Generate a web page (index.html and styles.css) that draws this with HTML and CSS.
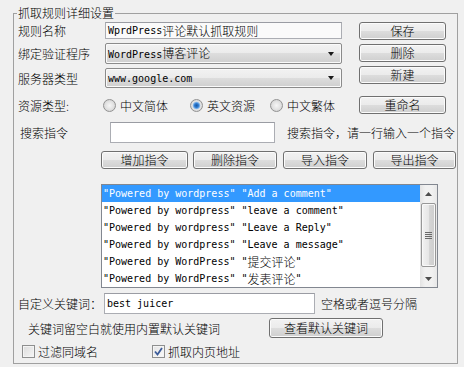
FILE: index.html
```html
<!DOCTYPE html>
<html lang="zh">
<head>
<meta charset="utf-8">
<title>抓取规则详细设置</title>
<link rel="stylesheet" href="styles.css">
</head>
<body>
<div class="window">
  <fieldset class="group">
    <legend class="group-title">抓取规则详细设置</legend>
    <div class="content">
      <div class="top">
        <div class="fields">
          <div class="field-row r1">
            <span class="label">规则名称</span>
            <div class="textbox tb-name"><span class="mono">WprdPress</span>评论默认抓取规则</div>
          </div>
          <div class="field-row r2">
            <span class="label">绑定验证程序</span>
            <div class="combo combo-tall"><span class="combo-text"><span class="mono">WordPress</span>博客评论</span><i class="arrow"></i></div>
          </div>
          <div class="field-row r3">
            <span class="label">服务器类型</span>
            <div class="combo"><span class="combo-text"><span class="mono">www.google.com</span></span><i class="arrow"></i></div>
          </div>
        </div>
        <div class="side-buttons">
          <button class="btn side-btn">保存</button>
          <button class="btn side-btn">删除</button>
          <button class="btn side-btn">新建</button>
        </div>
      </div>

      <div class="row row-type">
        <span class="label type-label">资源类型:</span>
        <span class="option opt1"><i class="radio"></i>中文简体</span>
        <span class="option opt2"><i class="radio checked"></i>英文资源</span>
        <span class="option opt3"><i class="radio"></i>中文繁体</span>
        <button class="btn side-btn">重命名</button>
      </div>

      <div class="row row-search">
        <span class="label search-label">搜索指令</span>
        <div class="textbox tb-search"></div>
        <span class="hint">搜索指令，请一行输入一个指令</span>
      </div>

      <div class="row row-cmds">
        <button class="btn cmd b1">增加指令</button>
        <button class="btn cmd b2">删除指令</button>
        <button class="btn cmd b3">导入指令</button>
        <button class="btn cmd b4">导出指令</button>
      </div>

      <div class="listbox">
        <div class="list-items">
          <div class="item selected"><span class="mono">"Powered by wordpress" "Add a comment"</span></div>
          <div class="item"><span class="mono">"Powered by wordpress" "leave a comment"</span></div>
          <div class="item"><span class="mono">"Powered by wordpress" "Leave a Reply"</span></div>
          <div class="item"><span class="mono">"Powered by wordpress" "Leave a message"</span></div>
          <div class="item"><span class="mono">"Powered by WordPress" "</span>提交评论<span class="mono">"</span></div>
          <div class="item"><span class="mono">"Powered by WordPress" "</span>发表评论<span class="mono">"</span></div>
        </div>
        <div class="scrollbar">
          <div class="sb-btn"><svg width="7" height="4" viewBox="0 0 7 4"><path d="M0 4 L3.5 0 L7 4 Z" fill="#4d4d4d"/></svg></div>
          <div class="sb-track">
            <div class="sb-thumb"><i></i><i></i><i></i><i></i></div>
          </div>
          <div class="sb-btn"><svg width="7" height="4" viewBox="0 0 7 4"><path d="M0 0 L7 0 L3.5 4 Z" fill="#4d4d4d"/></svg></div>
        </div>
      </div>

      <div class="row row-kw">
        <span class="label kw-label">自定义关键词：</span>
        <div class="textbox tb-kw"><span class="mono">best juicer</span></div>
        <span class="hint kw-hint">空格或者逗号分隔</span>
      </div>

      <div class="row row-kwhint">
        <span class="kw-note">关键词留空白就使用内置默认关键词</span>
        <button class="btn view-btn">查看默认关键词</button>
      </div>

      <div class="row row-checks">
        <span class="check-opt c1"><i class="check"></i>过滤同域名</span>
        <span class="check-opt c2"><i class="check checked"><svg width="9" height="9" viewBox="0 0 9 9"><path d="M1 4.5 L3.5 7.5 L8 1" fill="none" stroke="#3c5c9a" stroke-width="1.8"/></svg></i>抓取内页地址</span>
      </div>
    </div>
  </fieldset>
</div>
</body>
</html>
```

FILE: styles.css
```css
* { box-sizing: border-box; }
html, body { margin: 0; padding: 0; }
body {
  width: 464px;
  height: 367px;
  overflow: hidden;
  background: #f0f0f0;
  color: #000;
  font-family: "Noto Sans CJK SC", "Noto Sans", sans-serif;
  font-size: 12px;
  font-weight: 300;
}
.window { padding: 4px 0 0 13px; }
.group {
  width: 445px;
  height: 360px;
  margin: 0;
  padding: 0;
  min-width: 0;
  border: 1px solid #a0a0a0;
}
.group-title {
  margin-left: 3px;
  padding: 0 1px;
  height: 18px;
  line-height: 18px;
  font-size: 12px;
}
.content { padding-left: 4px; }
.mono {
  font-family: "DejaVu Sans Mono", "Liberation Mono", monospace;
  font-size: 10px;
  font-weight: 400;
}
.label { white-space: nowrap; flex: none; }

/* top section */
.top { display: flex; }
.fields { width: 324px; display: flex; flex-direction: column; }
.field-row { display: flex; align-items: center; }
.field-row .label { width: 87px; }
.r1 { height: 17px; }
.r2 { height: 21px; margin-top: 4px; }
.r3 { height: 20px; margin-top: 4px; }
.side-buttons {
  margin-left: 17px;
  display: flex;
  flex-direction: column;
  gap: 4px;
}

.textbox {
  height: 100%;
  background: #fff;
  border: 1px solid #abadb3;
  border-top-color: #9a9ca3;
  padding-left: 2px;
  display: flex;
  align-items: center;
  white-space: nowrap;
  line-height: 14px;
}
.tb-name { width: 237px; background: #fafafa; }

.combo {
  width: 237px;
  height: 100%;
  border: 1px solid #8b8b8b;
  border-radius: 2px;
  background: linear-gradient(#f2f2f2 0%, #ebebeb 50%, #dddddd 50%, #cfcfcf 100%);
  box-shadow: inset 0 0 0 1px #fafafa;
  display: flex;
  align-items: center;
  padding-left: 2px;
  padding-right: 7px;
  white-space: nowrap;
}
.combo-text { flex: 1; line-height: 14px; }
.arrow {
  width: 0;
  height: 0;
  border-left: 3.5px solid transparent;
  border-right: 3.5px solid transparent;
  border-top: 4px solid #1a1a1a;
}

.btn {
  display: flex;
  align-items: center;
  justify-content: center;
  padding: 0;
  margin: 0;
  height: 18px;
  border: 1px solid #707070;
  border-radius: 3px;
  background: linear-gradient(#f2f2f2 0%, #ebebeb 50%, #dddddd 50%, #cfcfcf 100%);
  box-shadow: inset 0 0 0 1px #fbfbfb;
  font-family: "Noto Sans CJK SC", sans-serif;
  font-size: 12px;
  font-weight: 300;
  line-height: 14px;
  color: #000;
}
.side-btn { width: 87px; flex: none; }

.row { display: flex; align-items: center; }

/* resource type */
.row-type { height: 18px; margin-top: 8px; }
.type-label { width: 85px; }
.option { display: flex; align-items: center; white-space: nowrap; flex: none; }
.opt1 { width: 87px; }
.opt2 { width: 80px; }
.opt3 { width: 89px; }
.radio {
  width: 13px;
  height: 13px;
  margin-right: 4px;
  border-radius: 50%;
  border: 1px solid #929292;
  background: radial-gradient(circle, #f6f6f6 0, #e2e2e2 4px, #d4d4d4 6px);
  flex: none;
}
.radio.checked {
  background: radial-gradient(circle, #1d5aa0 0, #2f7bd0 2px, #7fb4ea 3.2px, #e4e4e4 4.2px, #d4d4d4 6px);
}

/* search */
.row-search { height: 21px; margin-top: 8px; }
.search-label { width: 92px; padding-left: 2px; }
.tb-search { width: 165px; }
.hint { margin-left: 12px; white-space: nowrap; }

/* command buttons */
.row-cmds { height: 18px; margin-top: 8px; padding-left: 83px; }
.cmd { flex: none; }
.b1 { width: 87px; }
.b2 { width: 84px; margin-left: 5px; }
.b3 { width: 84px; margin-left: 6px; }
.b4 { width: 83px; margin-left: 6px; }

/* list */
.listbox {
  margin: 15px 0 0 83px;
  width: 337px;
  height: 104px;
  border: 1px solid #828790;
  background: #fff;
  display: flex;
}
.list-items { width: 318px; }
.item {
  height: 17px;
  line-height: 17px;
  padding-left: 1px;
  white-space: nowrap;
  display: flex;
  align-items: center;
}
.item.selected { background: #3399ff; color: #fff; }
.scrollbar {
  width: 17px;
  display: flex;
  flex-direction: column;
  background: linear-gradient(90deg, #e3e3e3, #f1f1f1 30%, #f1f1f1 70%, #e8e8e8);
}
.sb-btn {
  height: 17px;
  display: flex;
  align-items: center;
  justify-content: center;
  flex: none;
}
.sb-track { flex: 1; padding-top: 1px; padding-left: 1px; }
.sb-thumb {
  width: 15px;
  height: 64px;
  border: 1px solid #979797;
  border-radius: 2px;
  background: linear-gradient(90deg, #f2f2f2, #e6e6e6 50%, #d6d6d6 51%, #cdcdcd);
  box-shadow: inset 0 0 0 1px #f8f8f8;
  display: flex;
  flex-direction: column;
  align-items: center;
  justify-content: center;
  gap: 1px;
}
.sb-thumb i {
  display: block;
  width: 7px;
  height: 1px;
  background: #6a6a6a;
}

/* keywords */
.row-kw { height: 21px; margin-top: 5px; }
.kw-label { width: 86px; }
.tb-kw { width: 211px; }
.kw-hint { margin-left: 6px; }
.row-kwhint { height: 20px; margin-top: 4px; }
.kw-note { padding-left: 10px; width: 251px; white-space: nowrap; flex: none; }
.view-btn { width: 114px; height: 20px; flex: none; }

/* checks */
.row-checks { height: 16px; margin-top: 5px; padding-left: 4px; }
.check-opt { display: flex; align-items: center; white-space: nowrap; flex: none; }
.c1 { width: 130px; }
.check {
  width: 13px;
  height: 13px;
  margin-right: 3px;
  border: 1px solid #8e8f8f;
  background: linear-gradient(135deg, #dcdcdc, #f6f6f6);
  box-shadow: inset 0 0 0 1px #f4f4f4;
  display: flex;
  align-items: center;
  justify-content: center;
  flex: none;
}
.check.checked { background: linear-gradient(135deg, #e4e4e4, #fafafa); }
```
